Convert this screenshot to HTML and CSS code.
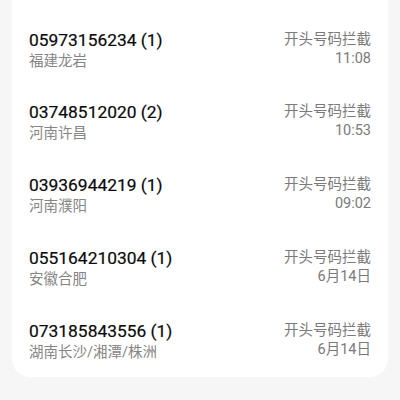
FILE: index.html
```html
<!DOCTYPE html>
<html lang="zh">
<head>
<meta charset="utf-8">
<link rel="stylesheet" href="styles.css">
</head>
<body>
<div class="card">
  <div class="row">
    <div class="left"><div class="num">05973156234 (1)</div><div class="loc">福建龙岩</div></div>
    <div class="right"><div class="tag">开头号码拦截</div><div class="time">11:08</div></div>
  </div>
  <div class="row">
    <div class="left"><div class="num">03748512020 (2)</div><div class="loc">河南许昌</div></div>
    <div class="right"><div class="tag">开头号码拦截</div><div class="time">10:53</div></div>
  </div>
  <div class="row">
    <div class="left"><div class="num">03936944219 (1)</div><div class="loc">河南濮阳</div></div>
    <div class="right"><div class="tag">开头号码拦截</div><div class="time">09:02</div></div>
  </div>
  <div class="row">
    <div class="left"><div class="num">055164210304 (1)</div><div class="loc">安徽合肥</div></div>
    <div class="right"><div class="tag">开头号码拦截</div><div class="time">6月14日</div></div>
  </div>
  <div class="row">
    <div class="left"><div class="num">073185843556 (1)</div><div class="loc">湖南长沙/湘潭/株洲</div></div>
    <div class="right"><div class="tag">开头号码拦截</div><div class="time">6月14日</div></div>
  </div>
</div>
</body>
</html>
```
FILE: styles.css
```css
html, body {
  margin: 0;
  padding: 0;
  background: #f6f6f6;
  font-family: Roboto, "Noto Sans CJK SC", sans-serif;
}
.card {
  margin: 0 12px;
  background: #ffffff;
  border-radius: 0 0 18px 18px;
  padding: 14px 17px 0 17px;
}
.row {
  display: flex;
  justify-content: space-between;
  align-items: flex-start;
  padding: 14.5px 0 15.25px;
}
.row:last-child {
  padding-bottom: 14px;
}
.num {
  font-size: 17.4px;
  line-height: 23px;
  color: #0a0a0a;
  -webkit-text-stroke: 0.2px #0a0a0a;
}
.loc {
  font-size: 14.5px;
  line-height: 20px;
  color: #858585;
}
.right {
  text-align: right;
}
.tag {
  font-size: 14.5px;
  line-height: 21px;
  color: #7a7a7a;
}
.time {
  font-size: 14.5px;
  line-height: 18px;
  color: #7a7a7a;
}
```
